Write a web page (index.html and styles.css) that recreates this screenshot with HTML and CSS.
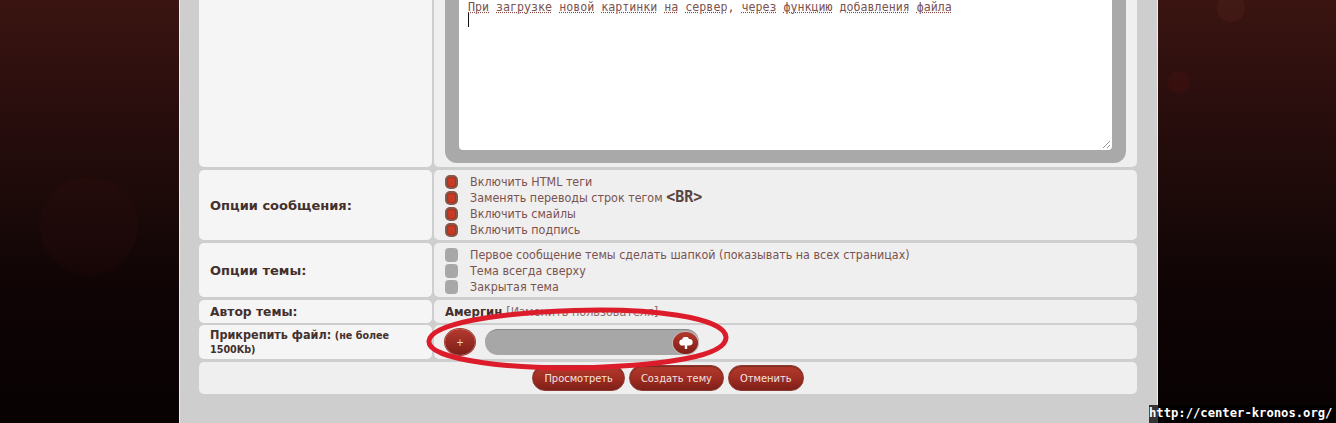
FILE: index.html
```html
<!DOCTYPE html>
<html lang="ru">
<head>
<meta charset="utf-8">
<title>Новая тема</title>
<link rel="stylesheet" href="styles.css">
</head>
<body>
<div class="bg-spot spot-a"></div>
<div class="bg-spot spot-b"></div>
<div class="bg-spot spot-c"></div>
<main class="page">
  <form class="form">
    <div class="row row-editor">
      <div class="cell label"></div>
      <div class="cell value">
        <div class="editor">
          <div class="editor-inner">
            <p class="editor-text"><u>При</u> <u>загрузке</u> <u>новой</u> <u>картинки</u> <u>на</u> <u>сервер</u>, <u>через</u> <u>функцию</u> <u>добавления</u> <u>файла</u></p>
            <span class="caret"></span>
            <svg class="grip" width="10" height="10" viewBox="0 0 10 10"><path d="M2 9 9 2M6 9 9 6" stroke="#999" fill="none"/></svg>
          </div>
        </div>
      </div>
    </div>
    <div class="row row-msg">
      <div class="cell label"><b>Опции сообщения:</b></div>
      <div class="cell value opts">
        <div class="opt"><span class="check on"></span>Включить HTML теги</div>
        <div class="opt"><span class="check on"></span><span>Заменять переводы строк тегом <b class="code">&lt;BR&gt;</b></span></div>
        <div class="opt"><span class="check on"></span>Включить смайлы</div>
        <div class="opt"><span class="check on"></span>Включить подпись</div>
      </div>
    </div>
    <div class="row row-topic">
      <div class="cell label"><b>Опции темы:</b></div>
      <div class="cell value opts">
        <div class="opt"><span class="check"></span>Первое сообщение темы сделать шапкой (показывать на всех страницах)</div>
        <div class="opt"><span class="check"></span>Тема всегда сверху</div>
        <div class="opt"><span class="check"></span>Закрытая тема</div>
      </div>
    </div>
    <div class="row row-author">
      <div class="cell label"><b>Автор темы:</b></div>
      <div class="cell value author"><b>Амергин</b> <span class="muted">[Изменить пользователя]</span></div>
    </div>
    <div class="row row-file">
      <div class="cell label file-label"><span><b>Прикрепить файл:</b> <b class="small">(не более 1500Kb)</b></span></div>
      <div class="cell value file">
        <span class="round plus">+</span>
        <div class="file-track">
          <span class="round upload">
            <svg width="14" height="12" viewBox="0 0 14 12"><path d="M3.5 8.5a3 3 0 0 1-.4-6A3.6 3.6 0 0 1 10 2a3.2 3.2 0 0 1 .8 6.400H8.200V12H5.800V8.500z" fill="#fff"/></svg>
          </span>
        </div>
      </div>
    </div>
    <div class="row row-actions">
      <div class="cell actions">
        <span class="btn">Просмотреть</span>
        <span class="btn">Создать тему</span>
        <span class="btn">Отменить</span>
      </div>
    </div>
  </form>
</main>
<svg class="ring" width="310" height="68" viewBox="0 0 310 68">
  <path d="M5 36C7 19 70 8 150 5.500C226 3 300 12 302 32C303 52 236 60 170 62.500C96 65 3 56 5 36Z" fill="none" stroke="#dc1c2a" stroke-width="5"/>
</svg>
<div class="stamp">http://center-kronos.org/</div>
</body>
</html>
```
FILE: styles.css
```css
* { box-sizing: border-box; }
html, body { margin: 0; height: 423px; overflow: hidden; }
body {
  position: relative;
  background: linear-gradient(#3a1511 0, #2b0e0e 100px, #1c0a09 200px, #0f0405 290px, #080202 423px);
  font-family: "DejaVu Sans", sans-serif;
  font-stretch: condensed;
  font-size: 12.400px;
  color: #7a5350;
}
.bg-spot { position: absolute; border-radius: 50%; background: rgba(90, 25, 20, .09); }
.spot-a { left: 40px; top: 177px; width: 98px; height: 98px; }
.spot-b { left: 1168px; top: 71px; width: 22px; height: 22px; background: rgba(90, 25, 20, .22); }
.spot-c { left: 1217px; top: -6px; width: 28px; height: 28px; background: rgba(110, 50, 40, .18); }
.page {
  position: relative;
  width: 979px;
  height: 423px;
  margin-left: 179px;
  padding: 0 19px 0 20px;
  background: #cdcecd;
  border: solid #eeeeee;
  border-width: 0 1px;
}
.form { display: flex; flex-direction: column; gap: 3px; width: 938px; margin-left: -1px; }
.row { display: grid; grid-template-columns: 233px 703px; gap: 2px; }
.row-editor { height: 167px; }
.row-msg { height: 70px; }
.row-topic { height: 54px; }
.row-author { height: 23px; }
.row-file { height: 34px; margin-top: -1px; }
.row-actions { height: 32px; display: block; }
.cell { border-radius: 5px; }
.label {
  display: flex;
  align-items: center;
  padding: 0 11px;
  background: #f5f5f5;
  color: #43302c;
  font-size: 13px;
  font-stretch: normal;
}
.row-editor .label, .row-editor .value { border-radius: 0 0 5px 5px; }
.value { background: #efefef; padding: 0 11px; }
.opts { display: flex; flex-direction: column; justify-content: center; padding-top: 1px; }
.opt { display: flex; align-items: center; gap: 12px; height: 16px; white-space: nowrap; }
.code { color: #5a4340; font-family: "DejaVu Sans Mono", monospace; font-size: 15px; line-height: 1; font-stretch: normal; }
.check {
  width: 13px;
  height: 14px;
  flex: none;
  border-radius: 4px;
  background: #a8a8a8;
}
.check.on {
  background: #c93c24;
  border: 2px solid #85584f;
  border-radius: 5px;
  box-shadow: inset 0 0 2px #7b1a0e;
}
.editor {
  position: relative;
  width: 681px;
  height: 163px;
  padding: 0 14px 13px;
  background: #a9a9a9;
  border-radius: 0 0 12px 12px;
}
.editor-inner {
  position: relative;
  height: 150px;
  background: #fff;
  border-radius: 0 0 4px 4px;
  padding: 0 9px;
  overflow: hidden;
}
.editor-text {
  margin: 0;
  font: 11.650px/14px "DejaVu Sans Mono", monospace;
  color: #7a5350;
  white-space: pre;
}
.editor-text u { text-decoration: underline dotted #8a4a44; text-underline-offset: 1px; }
.caret { display: block; width: 1px; height: 14px; background: #111; margin-top: -1px; }
.grip { position: absolute; right: 1px; bottom: 1px; }
.author { display: flex; align-items: center; gap: 4px; color: #8a7a78; }
.author b { color: #43302c; font-size: 13px; }
.muted { font-size: 12.500px; color: #8a6a68; }
.row-author .label { font-size: 12.300px; }
.file-label { line-height: 13px; font-stretch: condensed; font-size: 12.500px; }
.small { font-size: 10.700px; }
.file { display: flex; align-items: center; gap: 10px; padding-left: 11px; }
.round {
  display: inline-flex;
  align-items: center;
  justify-content: center;
  border-radius: 50%;
  background: linear-gradient(#b5392e, #7c1e17);
  color: #f3d9d4;
  flex: none;
}
.plus { width: 30px; height: 26px; font-size: 10px; box-shadow: 0 0 0 1px #a03a30; }
.file-track {
  width: 214px;
  height: 26px;
  display: flex;
  align-items: center;
  justify-content: flex-end;
  border-radius: 13px;
  background: #a7a7a7;
  border-top: 1px solid #888;
  padding-right: 1px;
}
.upload { width: 25px; height: 22px; box-shadow: 0 0 0 1px #c9b6b3; }
.actions {
  display: flex;
  justify-content: center;
  align-items: center;
  gap: 4px;
  height: 32px;
  background: #efefef;
}
.btn {
  display: inline-flex;
  align-items: center;
  height: 26px;
  padding: 0 11px;
  border-radius: 13px;
  background: linear-gradient(#b23a2d, #a12d22 50%, #7e1f18);
  box-shadow: inset 0 1px 1px #7c2b22;
  border: 1px solid #8d3a32;
  color: #f3e3e0;
  font-size: 11px;
  white-space: nowrap;
}
.ring { position: absolute; left: 424px; top: 305px; }
.stamp {
  position: absolute;
  left: 1149px;
  top: 405px;
  height: 18px;
  padding: 0 3px 0 0;
  font: bold 12.200px/16px "DejaVu Sans Mono", monospace;
  color: #fff;
  background: rgba(0, 0, 0, .75);
  white-space: nowrap;
}
```
